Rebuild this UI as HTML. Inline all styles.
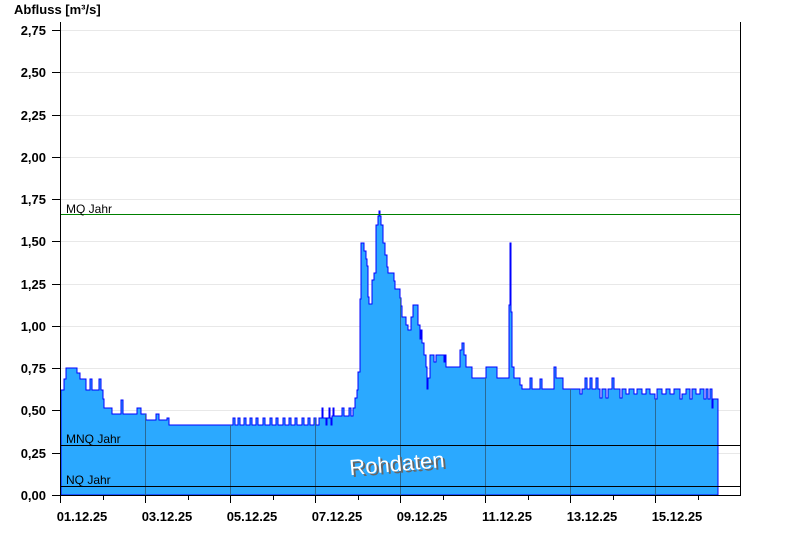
<!DOCTYPE html>
<html><head><meta charset="utf-8"><style>
body{margin:0;background:#fff;width:800px;height:550px;overflow:hidden}
svg{display:block;font-family:"Liberation Sans",Arial,sans-serif}
.yl{font-size:13px;font-weight:bold;text-anchor:end}
.xl{font-size:13px;font-weight:bold;text-anchor:middle}
.ll{font-size:12px}
</style></head><body>
<svg width="800" height="550" viewBox="0 0 800 550">
<defs>
<clipPath id="c"><path id="d" d="M61 495 V390 H64 V379 H66 V368 H77 V373 H80 V379 H86 V390 H90 V379 H92 V390 H99 V379 H101 V390 H103 V399 H104 V408 H112 V414 H121 V400 H123 V414 H137 V408 H141 V414 H146 V420 H156 V414 H159 V420 H167 V418 H169 V425 H233 V418 H235 V425 H238 V418 H240 V425 H244 V418 H246 V425 H250 V418 H252 V425 H256 V418 H258 V425 H263 V418 H265 V425 H270 V418 H272 V425 H276 V418 H278 V425 H283 V418 H285 V425 H289 V418 H291 V425 H295 V418 H297 V425 H302 V418 H304 V425 H308 V418 H310 V425 H314 V418 H316 V425 H319 V418 H322 V408 H323 V418 H326 V425 H327 V418 H329 V408 H330 V418 H331 V425 H332 V416 H333 V408 H334 V416 H342 V408 H344 V416 H349 V408 H351 V416 H353 V408 H355 V398 H357 V390 H358 V372 H359 V372 H360 V299 H361 V243 H364 V251 H366 V259 H367 V266 H368 V297 H369 V304 H372 V280 H374 V273 H376 V225 H378 V216 H379 V211 H380 V216 H381 V225 H383 V243 H385 V255 H387 V267 H388 V273 H394 V281 H395 V289 H400 V298 H401 V306 H402 V317 H406 V325 H408 V330 H411 V317 H413 V305 H418 V325 H420 V339 H421 V330 H422 V343 H424 V355 H426 V367 H427 V389 H428 V378 H430 V355 H434 V362 H436 V355 H444 V362 H445 V355 H446 V367 H460 V350 H462 V343 H464 V355 H466 V367 H472 V378 H486 V367 H497 V378 H509 V305 H510 V243 H511 V312 H512 V367 H514 V378 H520 V385 H522 V389 H530 V378 H532 V389 H540 V379 H542 V389 H554 V367 H556 V378 H563 V389 H580 V394 H582 V389 H585 V378 H587 V389 H590 V378 H592 V389 H596 V378 H598 V389 H600 V398 H602 V389 H606 V398 H608 V389 H612 V378 H614 V389 H620 V398 H622 V389 H626 V394 H629 V389 H634 V394 H637 V389 H642 V394 H646 V389 H650 V394 H655 V399 H657 V389 H662 V394 H666 V389 H670 V394 H674 V389 H680 V399 H682 V394 H686 V389 H690 V399 H692 V389 H696 V394 H700 V389 H704 V399 H706 V389 H708 V399 H710 V389 H712 V408 H713 V399 H718 V495 Z"/></clipPath>
</defs>
<g stroke="#e8e8e8" stroke-width="1">
<line x1="61" y1="30.5" x2="740" y2="30.5"/>
<line x1="61" y1="72.5" x2="740" y2="72.5"/>
<line x1="61" y1="115.5" x2="740" y2="115.5"/>
<line x1="61" y1="157.5" x2="740" y2="157.5"/>
<line x1="61" y1="199.5" x2="740" y2="199.5"/>
<line x1="61" y1="241.5" x2="740" y2="241.5"/>
<line x1="61" y1="284.5" x2="740" y2="284.5"/>
<line x1="61" y1="326.5" x2="740" y2="326.5"/>
<line x1="61" y1="368.5" x2="740" y2="368.5"/>
<line x1="61" y1="410.5" x2="740" y2="410.5"/>
<line x1="61" y1="453.5" x2="740" y2="453.5"/>
</g>
<use href="#d" fill="#2ba9ff" stroke="#0000ff" stroke-width="1"/>
<g clip-path="url(#c)" stroke="#2a6a96" stroke-width="1">
<line x1="145.5" y1="0" x2="145.5" y2="495"/><line x1="230.5" y1="0" x2="230.5" y2="495"/>
<line x1="315.5" y1="0" x2="315.5" y2="495"/><line x1="400.5" y1="0" x2="400.5" y2="495"/>
<line x1="485.5" y1="0" x2="485.5" y2="495"/><line x1="570.5" y1="0" x2="570.5" y2="495"/>
<line x1="655.5" y1="0" x2="655.5" y2="495"/>
</g>
<line x1="61" y1="214.5" x2="740" y2="214.5" stroke="#008000"/>
<line x1="61" y1="445.5" x2="740" y2="445.5" stroke="#000"/>
<line x1="61" y1="486.5" x2="740" y2="486.5" stroke="#000"/>
<text x="66" y="213" class="ll">MQ Jahr</text>
<text x="66" y="443" class="ll">MNQ Jahr</text>
<text x="66" y="484" class="ll">NQ Jahr</text>
<text x="399" y="473" transform="rotate(-5 399 465)" font-size="22" text-anchor="middle" fill="#666">Rohdaten</text>
<text x="397" y="471" transform="rotate(-5 399 465)" font-size="22" text-anchor="middle" fill="#fff">Rohdaten</text>
<g stroke="#000" stroke-width="1">
<line x1="60.5" y1="22" x2="60.5" y2="496"/>
<line x1="740.5" y1="22" x2="740.5" y2="496"/>
<line x1="52" y1="495.5" x2="741" y2="495.5"/>
<line x1="52" y1="30.5" x2="60" y2="30.5"/><line x1="52" y1="72.5" x2="60" y2="72.5"/><line x1="52" y1="115.5" x2="60" y2="115.5"/><line x1="52" y1="157.5" x2="60" y2="157.5"/><line x1="52" y1="199.5" x2="60" y2="199.5"/><line x1="52" y1="241.5" x2="60" y2="241.5"/><line x1="52" y1="284.5" x2="60" y2="284.5"/><line x1="52" y1="326.5" x2="60" y2="326.5"/><line x1="52" y1="368.5" x2="60" y2="368.5"/><line x1="52" y1="410.5" x2="60" y2="410.5"/><line x1="52" y1="453.5" x2="60" y2="453.5"/>
<line x1="60.5" y1="495" x2="60.5" y2="503"/><line x1="103.5" y1="495" x2="103.5" y2="500"/>
<line x1="145.5" y1="495" x2="145.5" y2="503"/><line x1="188.5" y1="495" x2="188.5" y2="500"/>
<line x1="230.5" y1="495" x2="230.5" y2="503"/><line x1="273.5" y1="495" x2="273.5" y2="500"/>
<line x1="315.5" y1="495" x2="315.5" y2="503"/><line x1="358.5" y1="495" x2="358.5" y2="500"/>
<line x1="400.5" y1="495" x2="400.5" y2="503"/><line x1="443.5" y1="495" x2="443.5" y2="500"/>
<line x1="485.5" y1="495" x2="485.5" y2="503"/><line x1="528.5" y1="495" x2="528.5" y2="500"/>
<line x1="570.5" y1="495" x2="570.5" y2="503"/><line x1="613.5" y1="495" x2="613.5" y2="500"/>
<line x1="655.5" y1="495" x2="655.5" y2="503"/><line x1="698.5" y1="495" x2="698.5" y2="500"/>
</g>
<text x="14" y="14" font-size="13" font-weight="bold">Abfluss [m³/s]</text>
<text class="yl" x="46" y="35">2,75</text><text class="yl" x="46" y="77">2,50</text>
<text class="yl" x="46" y="120">2,25</text><text class="yl" x="46" y="162">2,00</text>
<text class="yl" x="46" y="204">1,75</text><text class="yl" x="46" y="246">1,50</text>
<text class="yl" x="46" y="289">1,25</text><text class="yl" x="46" y="331">1,00</text>
<text class="yl" x="46" y="373">0,75</text><text class="yl" x="46" y="415">0,50</text>
<text class="yl" x="46" y="458">0,25</text><text class="yl" x="46" y="500">0,00</text>
<text class="xl" x="82" y="521">01.12.25</text><text class="xl" x="167" y="521">03.12.25</text>
<text class="xl" x="252" y="521">05.12.25</text><text class="xl" x="337" y="521">07.12.25</text>
<text class="xl" x="422" y="521">09.12.25</text><text class="xl" x="507" y="521">11.12.25</text>
<text class="xl" x="592" y="521">13.12.25</text><text class="xl" x="677" y="521">15.12.25</text>
</svg>
</body></html>
